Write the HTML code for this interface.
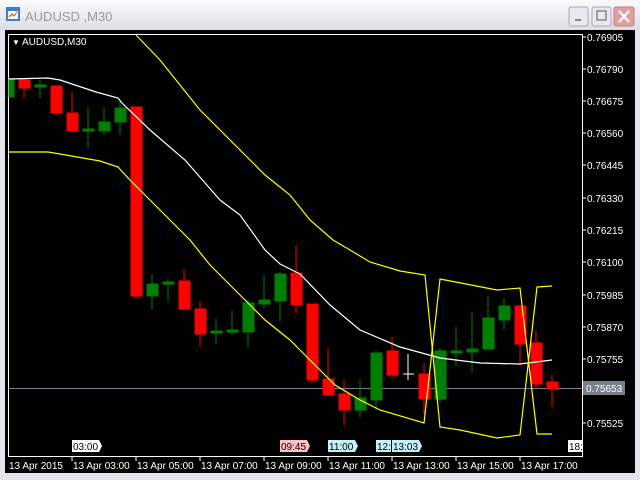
<!DOCTYPE html><html><head><style>
body{margin:0;width:640px;height:480px;overflow:hidden;background:#e9e9ef;font-family:"Liberation Sans",sans-serif}
</style></head><body>
<svg width="640" height="480" xmlns="http://www.w3.org/2000/svg" style="position:absolute;left:0;top:0">
<defs><linearGradient id="tb" x1="0" y1="0" x2="0" y2="1"><stop offset="0" stop-color="#fbfbfd"/><stop offset="1" stop-color="#dcdce4"/></linearGradient></defs>
<rect x="0" y="0" width="640" height="480" fill="#e4e4ea"/>
<rect x="0" y="0" width="640" height="30" fill="url(#tb)"/>
<rect x="6" y="7" width="14" height="14" fill="#3a7fd0"/><rect x="8" y="11" width="10" height="8" fill="#fff"/><polyline points="9,17 12,14 14,16 17,12" stroke="#e03020" fill="none"/>
<text x="25" y="21" font-size="13" fill="#9a9aa0">AUDUSD ,M30</text>
<rect x="569" y="7" width="19" height="19" rx="2" fill="#e8e8ee" stroke="#a8a8b4"/><rect x="575" y="19" width="6" height="2" fill="#888"/>
<rect x="592" y="7" width="19" height="19" rx="2" fill="#e8e8ee" stroke="#a8a8b4"/><rect x="597" y="11" width="9" height="9" fill="none" stroke="#888" stroke-width="1.5"/>
<rect x="614" y="7" width="20" height="19" rx="2" fill="#e0a0a0" stroke="#c08080"/><path d="M619 11 L629 22 M629 11 L619 22" stroke="#fff" stroke-width="2.2"/>
<rect x="5" y="30" width="630" height="443" fill="#000"/>
<g shape-rendering="crispEdges">
<rect x="8.5" y="34.5" width="574" height="422" fill="none" stroke="#fff"/>
<g stroke="#fff"><line x1="582" y1="37" x2="586" y2="37"/><line x1="582" y1="69" x2="586" y2="69"/><line x1="582" y1="101" x2="586" y2="101"/><line x1="582" y1="133" x2="586" y2="133"/><line x1="582" y1="165" x2="586" y2="165"/><line x1="582" y1="198" x2="586" y2="198"/><line x1="582" y1="230" x2="586" y2="230"/><line x1="582" y1="262" x2="586" y2="262"/><line x1="582" y1="295" x2="586" y2="295"/><line x1="582" y1="327" x2="586" y2="327"/><line x1="582" y1="359" x2="586" y2="359"/><line x1="582" y1="391" x2="586" y2="391"/><line x1="582" y1="423" x2="586" y2="423"/></g>
<line x1="9" y1="388.5" x2="582" y2="388.5" stroke="#77808c"/>
<g stroke="#f00" fill="#f00">
<line x1="24" y1="80" x2="24" y2="99"/><rect x="19" y="80" width="11" height="8"/>
<line x1="56" y1="86" x2="56" y2="115"/><rect x="51" y="86" width="11" height="27"/>
<line x1="72" y1="92" x2="72" y2="131"/><rect x="67" y="113" width="11" height="18"/>
<line x1="136" y1="107" x2="136" y2="298"/><rect x="131" y="107" width="11" height="189"/>
<line x1="184" y1="269" x2="184" y2="310"/><rect x="179" y="281" width="11" height="28"/>
<line x1="200" y1="301" x2="200" y2="346"/><rect x="195" y="309" width="11" height="25"/>
<line x1="296" y1="245" x2="296" y2="313"/><rect x="291" y="273" width="11" height="32"/>
<line x1="312" y1="304" x2="312" y2="383"/><rect x="307" y="304" width="11" height="76"/>
<line x1="328" y1="348" x2="328" y2="396"/><rect x="323" y="379" width="11" height="16"/>
<line x1="344" y1="380" x2="344" y2="425"/><rect x="339" y="394" width="11" height="16"/>
<line x1="392" y1="337" x2="392" y2="379"/><rect x="387" y="351" width="11" height="24"/>
<line x1="424" y1="363" x2="424" y2="414"/><rect x="419" y="374" width="11" height="25"/>
<line x1="520" y1="306" x2="520" y2="365"/><rect x="515" y="306" width="11" height="38"/>
<line x1="536" y1="331" x2="536" y2="390"/><rect x="531" y="343" width="11" height="41"/>
<line x1="552" y1="375" x2="552" y2="407"/><rect x="547" y="382" width="11" height="7"/>
</g>
<g stroke="#008000" fill="#008000">
<rect x="9" y="79" width="5" height="18"/>
<line x1="40" y1="80" x2="40" y2="98"/><rect x="35" y="85" width="11" height="2"/>
<line x1="88" y1="107" x2="88" y2="148"/><rect x="83" y="129" width="11" height="2"/>
<line x1="104" y1="108" x2="104" y2="135"/><rect x="99" y="122" width="11" height="9"/>
<line x1="120" y1="99" x2="120" y2="135"/><rect x="115" y="108" width="11" height="14"/>
<line x1="152" y1="274" x2="152" y2="310"/><rect x="147" y="284" width="11" height="12"/>
<line x1="168" y1="279" x2="168" y2="301"/><rect x="163" y="282" width="11" height="2"/>
<line x1="216" y1="319" x2="216" y2="344"/><rect x="211" y="331" width="11" height="2"/>
<line x1="232" y1="311" x2="232" y2="335"/><rect x="227" y="330" width="11" height="2"/>
<line x1="248" y1="300" x2="248" y2="348"/><rect x="243" y="303" width="11" height="29"/>
<line x1="264" y1="275" x2="264" y2="308"/><rect x="259" y="300" width="11" height="4"/>
<line x1="280" y1="272" x2="280" y2="321"/><rect x="275" y="274" width="11" height="27"/>
<line x1="360" y1="380" x2="360" y2="417"/><rect x="355" y="398" width="11" height="12"/>
<line x1="376" y1="351" x2="376" y2="410"/><rect x="371" y="353" width="11" height="47"/>
<line x1="440" y1="348" x2="440" y2="403"/><rect x="435" y="351" width="11" height="48"/>
<line x1="456" y1="327" x2="456" y2="366"/><rect x="451" y="351" width="11" height="2"/>
<line x1="472" y1="312" x2="472" y2="372"/><rect x="467" y="349" width="11" height="3"/>
<line x1="488" y1="296" x2="488" y2="350"/><rect x="483" y="318" width="11" height="31"/>
<line x1="504" y1="298" x2="504" y2="329"/><rect x="499" y="306" width="11" height="14"/>
</g>
<g stroke="#fff"><line x1="408" y1="354" x2="408" y2="380"/><line x1="403" y1="374" x2="414" y2="374"/></g>
<g stroke="#fff"><line x1="72" y1="456" x2="72" y2="461"/><line x1="136" y1="456" x2="136" y2="461"/><line x1="200" y1="456" x2="200" y2="461"/><line x1="264" y1="456" x2="264" y2="461"/><line x1="328" y1="456" x2="328" y2="461"/><line x1="392" y1="456" x2="392" y2="461"/><line x1="456" y1="456" x2="456" y2="461"/><line x1="520" y1="456" x2="520" y2="461"/></g>
</g>
<g fill="none" stroke-width="1.2">
<polyline stroke="#fff" points="9,79 48,78 60,80 96,92 118,98 122,103 150,130 185,160 220,200 240,215 265,250 280,264 296,272 300,274 330,305 360,330 400,347 440,358 480,363 520,364 552,360"/>
<polyline stroke="#ff0" points="136,35 160,60 200,110 250,160 265,175 290,195 310,220 333,240 350,250 370,262 400,271 425,275 440,427 460,430 497,438 520,435 537,287 552,286"/>
<polyline stroke="#ff0" points="9,152 48,152 60,154 100,161 118,167 130,180 150,200 190,240 210,265 250,305 265,320 290,340 300,350 320,370 335,385 360,400 380,410 424,423 440,279 497,290 520,288 537,434 552,434"/>
</g>
<g fill="#fff" font-size="10">
<text x="12" y="45" font-size="8">▼</text><text x="22" y="45">AUDUSD,M30</text>
<text x="587" y="41">0.76905</text><text x="587" y="73">0.76790</text><text x="587" y="105">0.76675</text><text x="587" y="137">0.76560</text><text x="587" y="169">0.76445</text><text x="587" y="202">0.76330</text><text x="587" y="234">0.76215</text><text x="587" y="266">0.76100</text><text x="587" y="299">0.75985</text><text x="587" y="331">0.75870</text><text x="587" y="363">0.75755</text><text x="587" y="427">0.75525</text>
</g>
<rect x="583" y="381" width="42" height="14" fill="#77808c"/><text x="586" y="392" font-size="10" fill="#fff">0.75653</text>
<g font-size="10">
<path d="M72 440h27l3 6-3 6h-27z" fill="#fff"/><text x="73" y="450" fill="#000">03:00</text>
<path d="M280 440h27l3 6-3 6h-27z" fill="#ffc0c8"/><text x="281" y="450" fill="#000">09:45</text>
<path d="M328 440h27l3 6-3 6h-27z" fill="#c8f0f8"/><text x="329" y="450" fill="#000">11:00</text>
<rect x="376" y="440" width="15" height="12" fill="#c8f0f8"/><text x="377" y="450" fill="#000">12:</text>
<path d="M392 440h27l3 6-3 6h-27z" fill="#c8f0f8"/><text x="393" y="450" fill="#000">13:03</text>
<rect x="568" y="440" width="14" height="12" fill="#fff"/><text x="569" y="450" fill="#000">18:</text>
</g>
<g fill="#fff" font-size="10">
<text x="9" y="469">13 Apr 2015</text><text x="73" y="469">13 Apr 03:00</text><text x="137" y="469">13 Apr 05:00</text><text x="201" y="469">13 Apr 07:00</text><text x="265" y="469">13 Apr 09:00</text><text x="329" y="469">13 Apr 11:00</text><text x="393" y="469">13 Apr 13:00</text><text x="457" y="469">13 Apr 15:00</text><text x="521" y="469">13 Apr 17:00</text>
</g>
</svg>
</body></html>
